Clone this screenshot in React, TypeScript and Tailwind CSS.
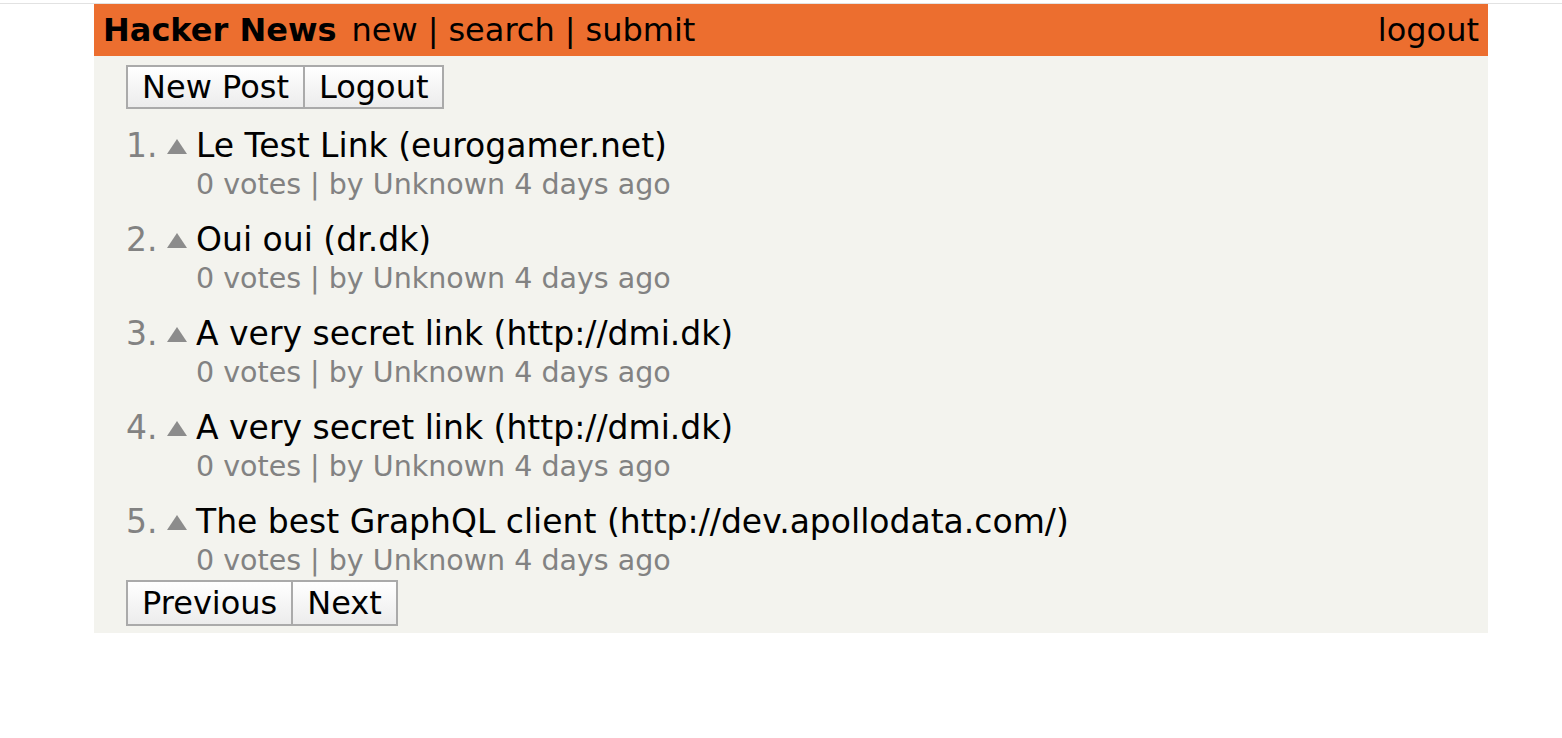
import React from "react"

interface Link {
    id: number
    title: string
    url: string
    votes: number
    author: string
    age: string
}

const links: Link[] = [
    { id: 1, title: "Le Test Link", url: "eurogamer.net", votes: 0, author: "Unknown", age: "4 days ago" },
    { id: 2, title: "Oui oui", url: "dr.dk", votes: 0, author: "Unknown", age: "4 days ago" },
    { id: 3, title: "A very secret link", url: "http://dmi.dk", votes: 0, author: "Unknown", age: "4 days ago" },
    { id: 4, title: "A very secret link", url: "http://dmi.dk", votes: 0, author: "Unknown", age: "4 days ago" },
    { id: 5, title: "The best GraphQL client", url: "http://dev.apollodata.com/", votes: 0, author: "Unknown", age: "4 days ago" },
]

const btn =
    "px-[14px] border-2 border-[#aaaaaa] bg-gradient-to-b from-[#ffffff] to-[#ececec] text-black text-[32px] leading-none"

function Header() {
    return (
        <div className="flex items-center justify-between h-[52px] bg-[#ec6e2f] px-[9px] text-black text-[32px]">
            <div className="flex items-center">
                <span className="font-bold mr-[15px]">Hacker News</span>
                <span>new</span>
                <span className="mx-[10px]">|</span>
                <span>search</span>
                <span className="mx-[10px]">|</span>
                <span>submit</span>
            </div>
            <span>logout</span>
        </div>
    )
}

function LinkItem({ link, index }: { link: Link; index: number }) {
    return (
        <div className="flex mt-[16px] text-[33px]">
            <span className="w-[31px] text-[#828282] leading-[38px]">{index}.</span>
            <div className="w-[39px] flex justify-center pt-[12px]">
                <svg width="20" height="15" viewBox="0 0 20 15">
                    <polygon points="10,0 20,15 0,15" fill="#8c8c8c" />
                </svg>
            </div>
            <div className="flex flex-col">
                <span className="leading-[38px]">
                    {link.title} ({link.url})
                </span>
                <span className="text-[#828282] text-[28.5px] leading-[40px]">
                    {link.votes} votes | by {link.author} {link.age}
                </span>
            </div>
        </div>
    )
}

export default function App() {
    return (
        <div className="min-h-[738px] bg-white text-[31px]" style={{ fontFamily: '"DejaVu Sans", Verdana, sans-serif' }}>
            <div className="h-[3px]" />
            <div className="h-px bg-[#e2e2e2]" />
            <div className="ml-[94px] w-[1394px]">
                <Header />
                <div className="bg-[#f3f3ee] pl-[32px] pt-[9px] pb-[7px]">
                    <div className="flex">
                        <button className={btn + " h-[44px]"}>New Post</button>
                        <button className={btn + " h-[44px] -ml-[2px]"}>Logout</button>
                    </div>
                    <div className="flex flex-col mt-[2px]">
                        {links.map((l, i) => (
                            <LinkItem key={l.id} link={l} index={i + 1} />
                        ))}
                    </div>
                    <div className="flex -mt-[1px]">
                        <button className={btn + " h-[46px]"}>Previous</button>
                        <button className={btn + " h-[46px] -ml-[2px]"}>Next</button>
                    </div>
                </div>
            </div>
        </div>
    )
}
